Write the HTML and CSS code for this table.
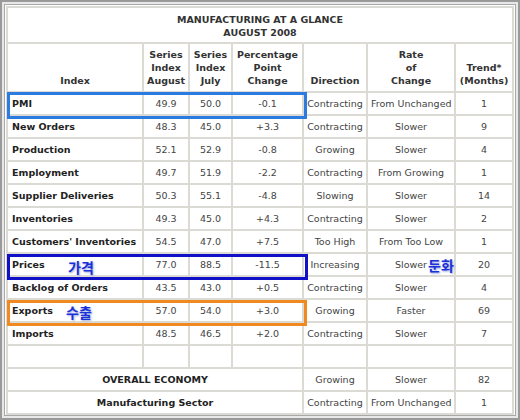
FILE: index.html
```html
<!DOCTYPE html>
<html>
<head>
<meta charset="utf-8">
<link rel="stylesheet" href="styles.css">
</head>
<body>
<div class="frame">
  <div class="inner">
    <table class="ism">
      <colgroup>
        <col class="c1"><col class="c2"><col class="c3"><col class="c4"><col class="c5"><col class="c6"><col class="c7">
      </colgroup>
      <tr class="title"><th colspan="7">MANUFACTURING AT A GLANCE<br>AUGUST 2008</th></tr>
      <tr class="head">
        <th>Index</th>
        <th>Series<br>Index<br>August</th>
        <th>Series<br>Index<br>July</th>
        <th>Percentage<br>Point<br>Change</th>
        <th>Direction</th>
        <th>Rate<br>of<br>Change</th>
        <th>Trend*<br>(Months)</th>
      </tr>
      <tr><td class="name">PMI</td><td>49.9</td><td>50.0</td><td>-0.1</td><td>Contracting</td><td>From Unchanged</td><td>1</td></tr>
      <tr><td class="name">New Orders</td><td>48.3</td><td>45.0</td><td>+3.3</td><td>Contracting</td><td>Slower</td><td>9</td></tr>
      <tr><td class="name">Production</td><td>52.1</td><td>52.9</td><td>-0.8</td><td>Growing</td><td>Slower</td><td>4</td></tr>
      <tr><td class="name">Employment</td><td>49.7</td><td>51.9</td><td>-2.2</td><td>Contracting</td><td>From Growing</td><td>1</td></tr>
      <tr><td class="name">Supplier Deliveries</td><td>50.3</td><td>55.1</td><td>-4.8</td><td>Slowing</td><td>Slower</td><td>14</td></tr>
      <tr><td class="name">Inventories</td><td>49.3</td><td>45.0</td><td>+4.3</td><td>Contracting</td><td>Slower</td><td>2</td></tr>
      <tr><td class="name">Customers' Inventories</td><td>54.5</td><td>47.0</td><td>+7.5</td><td>Too High</td><td>From Too Low</td><td>1</td></tr>
      <tr><td class="name">Prices</td><td>77.0</td><td>88.5</td><td>-11.5</td><td>Increasing</td><td>Slower</td><td>20</td></tr>
      <tr><td class="name">Backlog of Orders</td><td>43.5</td><td>43.0</td><td>+0.5</td><td>Contracting</td><td>Slower</td><td>4</td></tr>
      <tr><td class="name">Exports</td><td>57.0</td><td>54.0</td><td>+3.0</td><td>Growing</td><td>Faster</td><td>69</td></tr>
      <tr><td class="name">Imports</td><td>48.5</td><td>46.5</td><td>+2.0</td><td>Contracting</td><td>Slower</td><td>7</td></tr>
      <tr><td></td><td></td><td></td><td></td><td></td><td></td><td></td></tr>
      <tr><td colspan="4" class="sum">OVERALL ECONOMY</td><td>Growing</td><td>Slower</td><td>82</td></tr>
      <tr><td colspan="4" class="sum">Manufacturing Sector</td><td>Contracting</td><td>From Unchanged</td><td>1</td></tr>
    </table>
  </div>
  <div class="box box-pmi"></div>
  <div class="box box-prices"></div>
  <div class="box box-exports"></div>
  <span class="ko ko-price">가격</span>
  <span class="ko ko-slow">둔화</span>
  <span class="ko ko-export">수출</span>
</div>
</body>
</html>
```
FILE: styles.css
```css
html, body {
  margin: 0;
  padding: 0;
  background: #ffffff;
}
.frame {
  position: relative;
  width: 520px;
  height: 420px;
  box-sizing: border-box;
  border: 2px solid #9a9a9a;
  background: #e8e8e8;
  padding: 2px;
}
.inner {
  box-sizing: border-box;
  height: 100%;
  border: 1px solid #a8a8a8;
  background: #ffffff;
  padding: 1px;
}
.ism {
  border-collapse: collapse;
  table-layout: fixed;
  width: 506px;
  font-family: "DejaVu Sans", Verdana, sans-serif;
  font-size: 9.5px;
  color: #444;
}
.c1 { width: 136px; }
.c2 { width: 46px; }
.c3 { width: 43px; }
.c4 { width: 71px; }
.c5 { width: 64px; }
.c6 { width: 88px; }
.c7 { width: 58px; }
.ism th, .ism td {
  border: 2px solid #dcdad4;
  padding: 0 3px;
  text-align: center;
  vertical-align: middle;
  height: 21px;
  box-sizing: border-box;
  white-space: nowrap;
}
.ism th {
  color: #333;
  font-weight: bold;
  line-height: 13px;
}
.title th {
  height: 36px;
  padding-top: 1px;
}
.head th {
  height: 49px;
  vertical-align: bottom;
  padding-bottom: 4px;
}
.ism td {
  height: 23px;
}
.ism td.name {
  text-align: left;
  font-weight: bold;
  color: #222;
  padding-left: 4px;
}
.ism td.sum {
  font-weight: bold;
  color: #222;
}
.box {
  position: absolute;
  box-sizing: border-box;
  border: 3px solid;
}
.box-pmi {
  left: 5px; top: 90px; width: 300px; height: 27px;
  border-color: #2b7be0;
}
.box-prices {
  left: 5px; top: 252px; width: 301px; height: 26px;
  border-color: #1010c8;
}
.box-exports {
  left: 5px; top: 298px; width: 300px; height: 26px;
  border-color: #f08a20;
}
.ko {
  position: absolute;
  font-family: "Noto Sans CJK KR", sans-serif;
  font-weight: bold;
  font-size: 14px;
  line-height: 16px;
  color: #1a30d8;
  text-shadow: 1px 1px 2px #9aa8d8;
}
.ko-price { left: 66px; top: 257px; }
.ko-slow { left: 426px; top: 255px; }
.ko-export { left: 64px; top: 302px; }
```
